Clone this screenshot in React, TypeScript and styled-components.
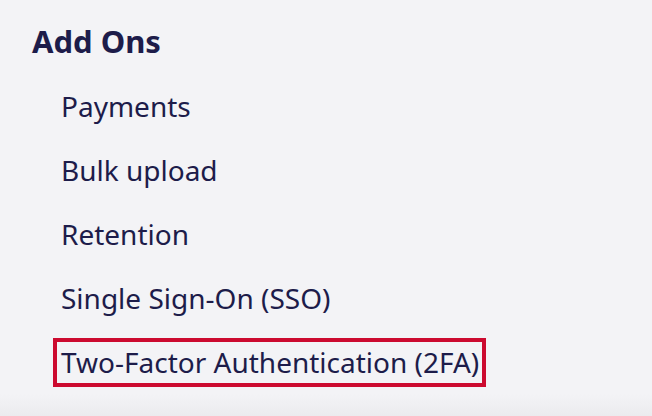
import React from 'react';
import styled, { createGlobalStyle } from 'styled-components';

const GlobalStyle = createGlobalStyle`
  html, body {
    margin: 0;
    padding: 0;
    background: #f3f3f6;
  }
  body {
    font-family: "Noto Sans", "Open Sans", sans-serif;
    -webkit-font-smoothing: antialiased;
  }
`;

const Page = styled.div`
  min-height: 100vh;
  box-sizing: border-box;
  padding: 23px 0 0 32px;
  background: linear-gradient(to bottom, #f3f3f6 0, #f3f3f6 calc(100% - 22px), #ebebee 100%);
  color: #1d1c4a;
`;

const Heading = styled.h2`
  margin: 0 0 23px;
  font-size: 31px;
  line-height: 36px;
  font-weight: 700;
`;

const List = styled.ul`
  list-style: none;
  margin: 0;
  padding: 0 0 0 21px;
  display: flex;
  flex-direction: column;
  align-items: flex-start;
  gap: 15px;
`;

const Item = styled.li<{ $highlighted?: boolean }>`
  padding: 0 3px 0 4px;
  font-size: 28px;
  line-height: 41px;
  border: 4px solid ${({ $highlighted }) => ($highlighted ? '#cc0a2f' : 'transparent')};
`;

const items = [
  'Payments',
  'Bulk upload',
  'Retention',
  'Single Sign-On (SSO)',
  'Two-Factor Authentication (2FA)',
];

const App: React.FC = () => (
  <>
    <GlobalStyle />
    <Page>
      <Heading>Add Ons</Heading>
      <List>
        {items.map((label) => (
          <Item key={label} $highlighted={label.includes('2FA')}>{label}</Item>
        ))}
      </List>
    </Page>
  </>
);

export default App;
